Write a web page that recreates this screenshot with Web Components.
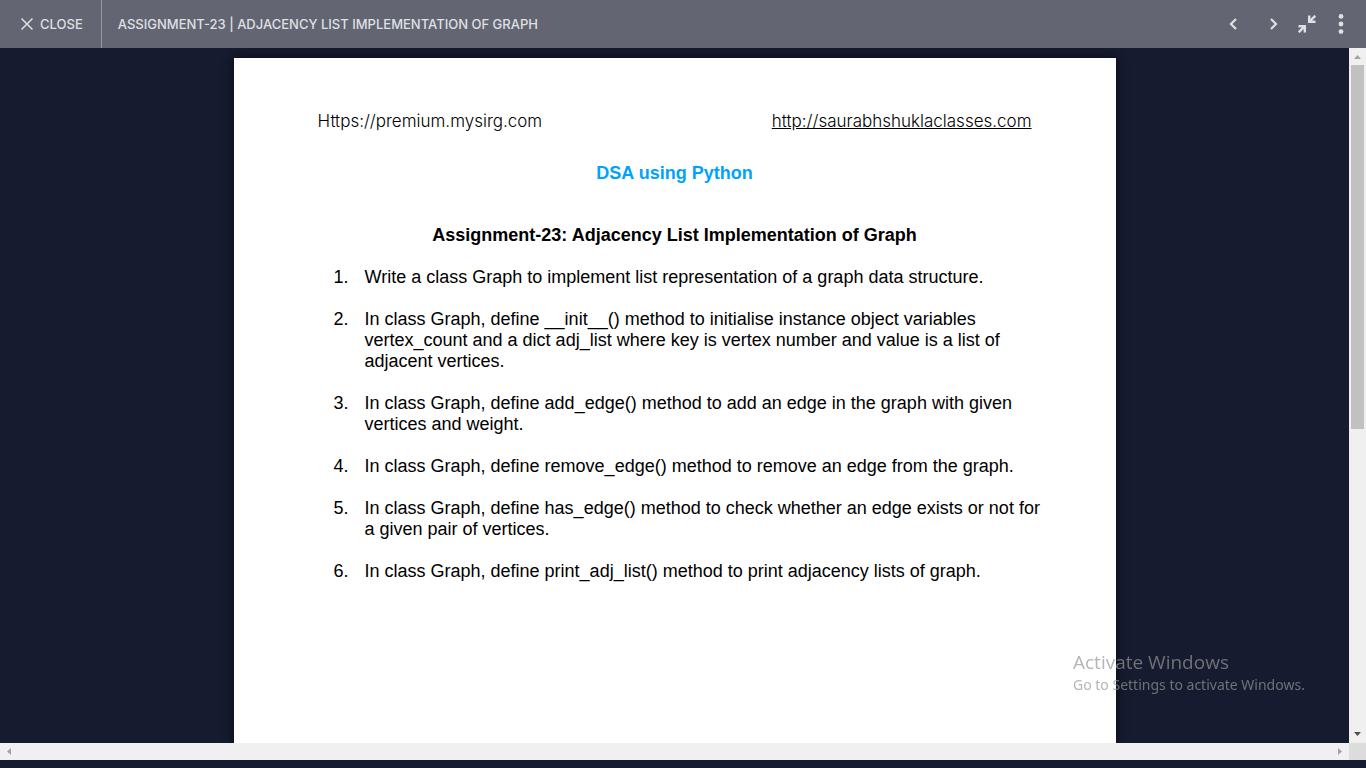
<!DOCTYPE html>
<html lang="en">
<head>
<meta charset="utf-8">
<meta name="viewport" content="width=device-width, initial-scale=1">
<title>Assignment-23 | Adjacency List Implementation of Graph</title>
<style>
html, body { height: 100%; margin: 0; }
body { background: #161b2f; overflow: hidden; font-family: "Liberation Sans", Arial, sans-serif; }
</style>
</head>
<body>
<lesson-viewer>
  <viewer-bar slot="bar">ASSIGNMENT-23 | ADJACENCY LIST IMPLEMENTATION OF GRAPH</viewer-bar>
  <paper-sheet>
    <a slot="left" href="https://premium.mysirg.com">Https://premium.mysirg.com</a>
    <a slot="right" href="http://saurabhshuklaclasses.com">http://saurabhshuklaclasses.com</a>
    <span slot="course">DSA using Python</span>
    <span slot="title">Assignment-23: Adjacency List Implementation of Graph</span>
    <task-item number="1.">Write a class Graph to implement list representation of a graph data structure.</task-item>
    <task-item number="2.">In class Graph, define __init__() method to initialise instance object variables vertex_count and a dict adj_list where key is vertex number and value is a list of adjacent vertices.</task-item>
    <task-item number="3.">In class Graph, define add_edge() method to add an edge in the graph with given vertices and weight.</task-item>
    <task-item number="4.">In class Graph, define remove_edge() method to remove an edge from the graph.</task-item>
    <task-item number="5.">In class Graph, define has_edge() method to check whether an edge exists or not for a given pair of vertices.</task-item>
    <task-item number="6.">In class Graph, define print_adj_list() method to print adjacency lists of graph.</task-item>
  </paper-sheet>
</lesson-viewer>
<activation-notice></activation-notice>

<script>
function define(name, html, setup) {
  const template = document.createElement('template');
  template.innerHTML = html;
  customElements.define(name, class extends HTMLElement {
    constructor() {
      super();
      this.attachShadow({ mode: 'open' }).append(template.content.cloneNode(true));
    }
    connectedCallback() { if (setup) setup(this, this.shadowRoot); }
  });
}

define('viewer-bar', `
<style>
:host { display: flex; height: 48px; background: #636573; color: #dfe0e3; font: 500 13px/20px Inter, sans-serif; }
button { display: flex; align-items: center; justify-content: center; margin: 0; padding: 0; border: 0; background: none; color: inherit; font: inherit; cursor: pointer; }
.close { gap: 6px; padding: 0 18px 0 20px; border-right: 1px solid #9698a2; }
h1 { flex: 1; min-width: 0; margin: 0; padding: 14px 16px; font: inherit; white-space: nowrap; overflow: hidden; text-overflow: ellipsis; }
nav { display: flex; padding-right: 8px; }
nav button { width: 34px; }
.previous { margin-right: 6px; }
svg { display: block; fill: none; stroke: currentColor; }
</style>
<button class="close" type="button"><svg width="14" height="14" viewBox="0 0 14 14" stroke-width="1.5"><path d="M1.500 1.500 12.500 12.500M12.500 1.500 1.500 12.500"/></svg><span>CLOSE</span></button>
<h1><slot></slot></h1>
<nav aria-label="Lesson controls">
  <button class="previous" type="button" aria-label="Previous"><svg width="12" height="12" viewBox="0 0 12 12" stroke-width="2.200"><path d="M9 1 4 6l5 5"/></svg></button>
  <button type="button" aria-label="Next"><svg width="12" height="12" viewBox="0 0 12 12" stroke-width="2.200"><path d="M4 1l5 5-5 5"/></svg></button>
  <button type="button" aria-label="Exit full screen"><svg width="18" height="18" viewBox="0 0 18 18" stroke-width="2.400"><path d="M17.300.700 11.500 6.500M11.200.500v6.300h6.300M.700 17.300 6.500 11.500M.500 11.200h6.300v6.300"/></svg></button>
  <button type="button" aria-label="More"><svg width="6" height="20" viewBox="0 0 6 20" style="fill:currentColor;stroke:none"><circle cx="3" cy="2.400" r="2.400"/><circle cx="3" cy="10" r="2.400"/><circle cx="3" cy="17.600" r="2.400"/></svg></button>
</nav>`);

define('scroll-rail', `
<style>
:host { display: flex; flex-direction: column; align-items: center; background: #f0f0f0; color: #a3a3a3; }
:host([horizontal]) { flex-direction: row; }
svg { flex: none; display: block; width: 17px; height: 17px; fill: currentColor; }
.track { flex: 1; min-height: 0; width: 13px; }
.thumb { height: 55%; background: #c1c1c1; }
.end { color: #505050; }
:host([horizontal]) svg { transform: rotate(-90deg); }
:host([horizontal]) .end { color: #a3a3a3; }
:host([horizontal]) .thumb { display: none; }
</style>
<svg viewBox="0 0 17 17"><path d="M5 11 8.500 7 12 11z"/></svg>
<div class="track"><div class="thumb"></div></div>
<svg class="end" viewBox="0 0 17 17"><path d="M5 6 8.500 10 12 6z"/></svg>`);

define('lesson-viewer', `
<style>
:host { display: grid; grid-template-rows: auto minmax(0, 1fr) 17px; height: calc(100vh - 8px); }
.main { display: grid; grid-template-columns: minmax(0, 1fr) 17px; min-height: 0; }
.stage { display: flex; justify-content: center; align-items: flex-start; padding-top: 10px; overflow: hidden; }
.foot { display: grid; grid-template-columns: minmax(0, 1fr) 17px; background: #dcdcdc; }
</style>
<slot name="bar"></slot>
<div class="main"><main class="stage"><slot></slot></main><scroll-rail></scroll-rail></div>
<div class="foot"><scroll-rail horizontal></scroll-rail></div>`);

define('paper-sheet', `
<style>
:host { display: block; box-sizing: border-box; width: 882px; max-width: 100%; min-height: 1248px; padding: 53px 84px; background: #fff; color: #000; box-shadow: 0 0 9px 1px #0b0d18; font-size: 18px; line-height: 21px; }
header { display: flex; justify-content: space-between; font: 300 17px/21px Inter, sans-serif; }
::slotted(a) { color: inherit; }
::slotted([slot="left"]) { text-decoration: none; }
h2, h3 { margin: 0; font-size: 18px; line-height: 21px; text-align: center; }
h2 { margin-top: 31px; color: #00a2ff; }
h3 { margin-top: 41px; }
.tasks { display: flex; flex-direction: column; gap: 21px; margin: 21px -16px 0 0; padding-left: 16px; }
</style>
<header><slot name="left"></slot><slot name="right"></slot></header>
<h2><slot name="course"></slot></h2>
<h3><slot name="title"></slot></h3>
<div class="tasks" role="list"><slot></slot></div>`);

define('task-item', `
<style>
:host { display: grid; grid-template-columns: 31px minmax(0, 1fr); }
</style>
<span class="number"></span><span><slot></slot></span>`, (host, root) => {
  host.setAttribute('role', 'listitem');
  root.querySelector('.number').textContent = host.getAttribute('number');
});

define('activation-notice', `
<style>
:host { position: fixed; right: 57px; bottom: 73px; width: 236px; color: rgba(150, 150, 150, .7); font-family: "Open Sans", sans-serif; pointer-events: none; white-space: nowrap; }
p { margin: 0; }
.title { font-size: 19px; line-height: 25px; }
.hint { font-family: "Noto Sans", sans-serif; font-size: 14px; line-height: 20px; }
</style>
<p class="title">Activate Windows</p>
<p class="hint">Go to Settings to activate Windows.</p>`);
</script>
</body>
</html>
